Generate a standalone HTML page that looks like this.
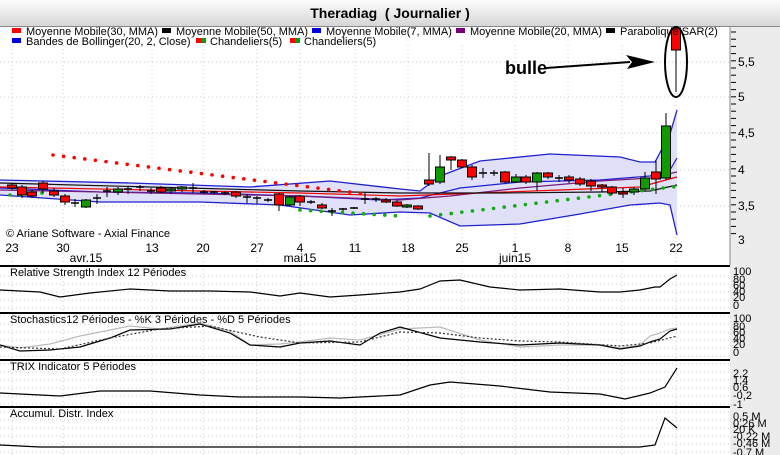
<!DOCTYPE html>
<html><head><meta charset="utf-8"><style>
html,body{margin:0;padding:0;background:#fff;}
body{width:780px;height:455px;overflow:hidden;position:relative;font-family:"Liberation Sans",sans-serif;}
#hdr{position:absolute;left:0;top:0;width:780px;height:26px;background:linear-gradient(#fdfdfd,#d6d6d6);border-bottom:1px solid #888;}
#hdr div{position:absolute;left:0;width:780px;top:5px;text-align:center;font-weight:bold;font-size:14px;}
svg{position:absolute;left:0;top:0;}
</style></head><body>
<div id="hdr"><div>Theradiag &nbsp;( Journalier )</div></div>
<svg id="s" width="780" height="455" xmlns="http://www.w3.org/2000/svg" font-family="Liberation Sans, sans-serif">
<rect x="730" y="27" width="50" height="428" fill="#ececec"/>
<g id="grid"></g>
<polygon fill="#e0e0f8" points="0,180 130,183 250,187 330,181 400,189 420,191 440,176 480,161 550,154 620,157 640,162 655,162 670,134 677,110 677,235 670,205 660,203 630,205 580,214 520,224 460,226 430,213 400,212 350,215 280,205 200,202 100,202 0,195"/>
<polyline fill="none" stroke="#2020d0" stroke-width="1.3" points="0,180 130,183 250,187 330,181 400,189 420,191 440,176 480,161 550,154 620,157 640,162 655,162 670,134 677,110"/>
<polyline fill="none" stroke="#2020d0" stroke-width="1.3" points="0,195 100,202 200,202 280,205 350,215 400,212 430,213 460,226 520,224 580,214 630,205 660,203 670,205 677,235"/>
<polyline fill="none" stroke="#2020d0" stroke-width="1.2" points="0,188 100,192 200,193 300,196 380,200 420,198 460,188 520,182 600,180 650,176 670,170 677,158"/>
<polyline fill="none" stroke="#7a1a7a" stroke-width="1.2" points="0,190 150,193 300,196 400,200 450,196 520,188 600,181 650,178 677,172"/>
<polyline fill="none" stroke="#e00" stroke-width="1.2" points="0,187 150,190 300,193 400,196 480,193 560,190 640,187 677,177"/>
<polyline fill="none" stroke="#111" stroke-width="1.2" points="0,183 150,187 300,191 400,193 500,193 600,192 650,191 677,185"/>
<g id="dots"></g>
<g id="candles"></g>
<ellipse cx="676" cy="62" rx="11" ry="35" fill="none" stroke="#000" stroke-width="2"/>
<text x="505" y="74" font-size="18" font-weight="bold">bulle</text>
<line x1="546" y1="68" x2="630" y2="62" stroke="#000" stroke-width="2"/>
<polygon points="655,62 626,55 632,62 627,69" fill="#000"/>
<g id="leg" font-size="11"></g>
<text x="6" y="237" font-size="11">© Ariane Software - Axial Finance</text>
<g id="xl" font-size="12"></g>
<g id="yax" font-size="12"></g>
<g id="panels" font-size="11"></g>
</svg>
<script>
var NS="http://www.w3.org/2000/svg";
function el(p,t,a,txt){var e=document.createElementNS(NS,t);for(var k in a)e.setAttribute(k,a[k]);if(txt!=null)e.textContent=txt;document.getElementById(p).appendChild(e);return e;}
// grid verticals
var dx=[12,63,152,203,257,300,355,408,462,515,568,622,676];
dx.forEach(function(x){el('grid','line',{x1:x,y1:45,x2:x,y2:455,stroke:'#c8c8c8','stroke-dasharray':'1,3'});});
[62,97,133,170,206].forEach(function(y){el('grid','line',{x1:0,y1:y,x2:730,y2:y,stroke:'#c8c8c8','stroke-dasharray':'1,3'});});
for(var y=276;y<455;y+=8){if(Math.abs(y-313)>2&&Math.abs(y-360)>2&&Math.abs(y-407)>2)el('grid','line',{x1:0,y1:y,x2:730,y2:y,stroke:'#d0d0d0','stroke-dasharray':'1,3'});}
// SAR dots
for(var i=0;i<30;i++){var x=53+i*10.6;if(x>380)break;el('dots','circle',{cx:x,cy:155+(x-53)*0.125,r:1.8,fill:'#f00'});}
[[10,195],[20,195],[42,193]].forEach(function(p){el('dots','circle',{cx:p[0],cy:p[1],r:1.8,fill:'#1a1'});});
for(var x=300;x<=400;x+=10.6)el('dots','circle',{cx:x,cy:210+(x-300)*0.06,r:1.8,fill:'#1a1'});
for(var i=0;i<24;i++){var x=430+i*10.6;el('dots','circle',{cx:x,cy:216-(x-430)*0.12,r:1.8,fill:'#1a1'});}
// candles [x,top,bot,color, hi, lo]
var C=[[12,185,188,'r',183,190],[22,187,195,'r',185,198],[32,192,196,'r',190,198],[43,183,189,'r',181,193],[54,191,195,'r',188,197],[65,196,202,'r',194,205],[75,203,203,'d',199,207],[86,200,207,'g',199,208],[97,198,198,'d',194,204],[107,191,191,'d',187,197],[118,189,192,'g',187,195],[128,189,189,'d',187,194],[140,187,187,'d',185,191],[151,191,191,'d',188,194],[161,188,192,'r',186,193],[171,189,191,'g',187,194],[182,187,189,'g',186,192],[193,188,188,'d',183,193],[204,192,192,'d',190,194],[214,192,192,'d',191,194],[225,193,193,'d',191,195],[236,192,196,'r',191,198],[247,197,197,'d',194,203],[257,198,198,'d',196,204],[268,200,200,'d',198,202],[279,194,205,'r',193,211],[290,197,205,'g',196,206],[300,196,202,'r',195,206],[311,202,202,'d',200,204],[322,205,208,'r',203,209],[332,211,211,'d',208,216],[343,209,209,'d',208,211],[354,208,208,'d',207,209],[365,199,199,'d',193,204],[376,199,199,'d',197,202],[386,200,202,'r',198,203],[397,202,206,'r',200,207],[407,205,207,'g',204,208],[418,206,209,'r',205,210],[429,180,184,'r',153,186],[440,167,182,'g',155,184],[451,157,160,'r',156,170],[462,160,167,'r',159,168],[472,167,177,'r',165,180],[483,173,173,'d',168,178],[494,173,173,'d',170,176],[505,172,182,'r',171,183],[516,177,182,'g',174,183],[526,177,182,'r',175,184],[537,173,182,'g',172,191],[548,173,177,'r',172,179],[559,178,178,'d',175,182],[569,177,180,'r',175,183],[580,179,184,'r',177,186],[591,181,186,'r',179,191],[602,185,187,'r',184,192],[612,187,193,'r',186,195],[623,192,194,'r',188,198],[634,189,192,'g',187,195],[645,178,189,'g',172,191],[656,172,179,'r',160,194],[666,126,178,'g',113,180],[676,28,50,'r',27,92]];
C.forEach(function(c){var x=c[0];el('candles','line',{x1:x,y1:c[4],x2:x,y2:c[5],stroke:'#000'});
 if(c[3]=='d'){el('candles','line',{x1:x-4,y1:c[1],x2:x+4,y2:c[1],stroke:'#000','stroke-width':1.5});}
 else el('candles','rect',{x:x-4.5,y:c[1],width:9,height:Math.max(2,c[2]-c[1]),fill:c[3]=='r'?'#f00':'#190',stroke:'#000'});});
// legend
var L=[[12,35,'#f00','Moyenne Mobile(30, MMA)'],[162,35,'#000','Moyenne Mobile(50, MMA)'],[312,35,'#00d','Moyenne Mobile(7, MMA)'],[456,35,'#707','Moyenne Mobile(20, MMA)'],[606,35,'#000','Parabolique SAR(2)'],[12,45,'#00d','Bandes de Bollinger(20, 2, Close)']];
L.forEach(function(l){el('leg','rect',{x:l[0],y:l[1]-7,width:9,height:5,fill:l[2]});el('leg','text',{x:l[0]+14,y:l[1]},l[3]);});
[[196,45],[290,45]].forEach(function(p){el('leg','rect',{x:p[0],y:p[1]-7,width:5,height:5,fill:'#f00'});el('leg','rect',{x:p[0]+5,y:p[1]-7,width:5,height:5,fill:'#190'});el('leg','text',{x:p[0]+14,y:p[1]},'Chandeliers(5)');});
// x labels
var xl=['23','30','13','20','27','4','11','18','25','1','8','15','22'];
dx.forEach(function(x,i){el('xl','text',{x:x,y:252,'text-anchor':'middle'},xl[i]);});
el('xl','text',{x:86,y:262,'text-anchor':'middle'},'avr.15');el('xl','text',{x:300,y:262,'text-anchor':'middle'},'mai15');el('xl','text',{x:515,y:262,'text-anchor':'middle'},'juin15');
// y axis
el('yax','line',{x1:730,y1:27,x2:730,y2:265,stroke:'#888'});
for(var y=32;y<=240;y+=7.2)el('yax','line',{x1:731,y1:y,x2:736,y2:y,stroke:'#000'});
[['5,5',62],['5',97],['4,5',133],['4',170],['3,5',206],['3',240]].forEach(function(l){el('yax','text',{x:738,y:l[1]+4},l[0]);});
// panels
[266,313,360,407].forEach(function(y){el('panels','line',{x1:0,y1:y,x2:730,y2:y,stroke:'#000','stroke-width':2});});
el('panels','text',{x:10,y:276},'Relative Strength Index 12 Périodes');
el('panels','text',{x:10,y:323},'Stochastics12 Périodes  -  %K 3 Périodes  -  %D 5 Périodes');
el('panels','text',{x:10,y:370},'TRIX Indicator 5 Périodes');
el('panels','text',{x:10,y:417},'Accumul. Distr. Index');
function pl(pts,st,extra){var a={points:pts,fill:'none',stroke:st,'stroke-width':1.2};for(var k in extra)a[k]=extra[k];el('panels','polyline',a);}
pl('0,290 40,292 60,297 90,293 130,289 170,291 210,291 250,292 280,296 300,293 330,297 360,295 400,292 420,289 440,281 460,280 490,287 520,290 560,289 600,292 620,292 640,290 655,287 660,287 670,279 677,275','#000');
pl('0,345 20,348 50,344 80,336 110,330 130,326 160,329 200,323 230,331 250,345 280,344 300,342 330,338 360,340 400,329 440,327 480,340 520,347 560,345 600,345 620,348 640,345 650,336 660,333 670,329 677,328','#bbb');
pl('0,345 20,351 50,350 80,347 110,338 130,330 170,329 200,324 230,333 250,345 280,347 300,343 330,341 360,345 380,333 400,327 440,338 480,342 520,345 560,343 600,345 620,349 640,346 650,342 660,339 670,331 677,329','#000');
pl('0,347 60,349 110,338 160,329 210,326 260,337 300,343 360,342 400,332 440,333 480,338 520,341 560,342 620,346 650,343 677,336','#333',{'stroke-dasharray':'2,2'});
pl('0,393 60,396 100,391 150,391 200,395 240,397 300,397 340,398 380,396 400,395 430,385 450,382 500,386 550,392 600,394 625,399 650,393 665,387 677,368','#000');
pl('0,445 40,447 100,447 200,447 400,447 600,447 640,447 655,445 665,418 677,428','#000');
var R=[['100',271],['80',279],['60',285],['40',291],['20',297],['0',305],['100',318],['80',326],['60',332],['40',338],['20',344],['0',352],['2,2',373],['1,4',380],['0,6',387],['-0,2',395],['-1',404],['0,5 M',416],['0,26 M',423],['20 K',429],['-0,22 M',436],['-0,46 M',443],['-0,7 M',452]];
R.forEach(function(r){el('panels','text',{x:733,y:r[1]+4,'font-size':'11'},r[0]);});
</script>
</body></html>
